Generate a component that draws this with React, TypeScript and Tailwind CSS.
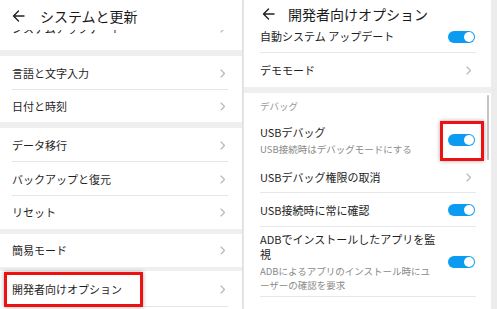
import React from "react";

const font = { fontFamily: '"Noto Sans CJK JP", "Noto Sans", sans-serif' };

function BackArrow() {
  return (
    <svg width="13" height="12" viewBox="0 0 13 12" className="shrink-0">
      <path d="M12 6H1.5M6.5 1L1.5 6L6.5 11" fill="none" stroke="#222" strokeWidth="1.4" strokeLinecap="round" strokeLinejoin="round" />
    </svg>
  );
}

function Chevron() {
  return (
    <svg width="6" height="9" viewBox="0 0 6 9" className="shrink-0">
      <path d="M1 1l3.5 3.5L1 8" fill="none" stroke="#b5b5b5" strokeWidth="1.1" strokeLinecap="round" strokeLinejoin="round" />
    </svg>
  );
}

function Toggle() {
  return (
    <div className="w-[27px] h-[12px] rounded-full bg-[#0b9cf2] flex items-center justify-end pr-[1px] shrink-0">
      <div className="w-[10px] h-[10px] rounded-full bg-white" />
    </div>
  );
}

function LeftRow({ label, h, divider = false }: { label: string; h: string; divider?: boolean }) {
  return (
    <div className={`relative flex items-center justify-between pl-[12px] pr-[16px] ${h}`}>
      <span className="text-[11px] text-[#1e1e1e] leading-none whitespace-nowrap">{label}</span>
      <Chevron />
      {divider && <div className="absolute left-[12px] right-[14px] bottom-0 h-px bg-[#e6e6e6]" />}
    </div>
  );
}

function Band({ h }: { h: string }) {
  return <div className={`${h} bg-[#efefef] w-full`} />;
}

export default function App() {
  return (
    <div className="w-[497px] h-[309px] overflow-hidden bg-[#ececec] flex" style={font}>
      {/* Left panel */}
      <div className="w-[242px] h-full bg-white flex flex-col shadow-[1px_0_2px_rgba(0,0,0,0.08)] z-10">
        <div className="h-[30px] flex items-center pl-[12px] pt-[2px] shrink-0 relative z-10 bg-white">
          <BackArrow />
          <span className="ml-[15px] text-[14px] text-[#1a1a1a] leading-none">システムと更新</span>
        </div>
        <div className="h-[20px] overflow-hidden shrink-0">
          <div className="mt-[-19px]">
            <LeftRow label="システムアップデート" h="h-[34px]" />
          </div>
        </div>
        <Band h="h-[6px]" />
        <LeftRow label="言語と文字入力" h="h-[34px]" divider />
        <LeftRow label="日付と時刻" h="h-[32px]" />
        <Band h="h-[6px]" />
        <LeftRow label="データ移行" h="h-[34px]" divider />
        <LeftRow label="バックアップと復元" h="h-[34px]" divider />
        <LeftRow label="リセット" h="h-[33px]" />
        <Band h="h-[5px]" />
        <LeftRow label="簡易モード" h="h-[33px]" />
        <Band h="h-[4px]" />
        <div className="relative">
          <LeftRow label="開発者向けオプション" h="h-[36px]" divider />
          <div className="absolute left-[4px] top-[1px] w-[139px] h-[35px] border-[3px] border-[#ee1111] shadow-[0_0_4px_rgba(0,0,0,0.35)]" />
        </div>
      </div>

      {/* Right panel */}
      <div className="relative ml-[2px] w-[247px] h-full bg-white flex flex-col">
        <div className="h-[24px] flex items-center pl-[18px] pt-[3px] shrink-0">
          <BackArrow />
          <span className="ml-[13px] text-[14px] text-[#1a1a1a] leading-none">開発者向けオプション</span>
        </div>
        <div className="relative h-[30px] flex items-center justify-between pl-[16px] pr-[16px] pb-[4px]">
          <span className="text-[11px] text-[#1e1e1e] leading-none">自動システム アップデート</span>
          <Toggle />
          <div className="absolute left-[16px] right-[15px] bottom-[1px] h-px bg-[#e8e8e8]" />
        </div>
        <div className="h-[34px] flex items-center justify-between pl-[16px] pr-[19px]">
          <span className="text-[11px] text-[#1e1e1e] leading-none">デモモード</span>
          <Chevron />
        </div>
        <Band h="h-[6px]" />
        <div className="h-[26px] flex items-center pl-[16px] pt-[2px]">
          <span className="text-[9.5px] text-[#9a9a9a] leading-none">デバッグ</span>
        </div>
        <div className="relative h-[43px] flex items-center justify-between pl-[16px] pr-[16px]">
          <div className="flex flex-col">
            <span className="text-[11px] text-[#1e1e1e] leading-[15px]">USBデバッグ</span>
            <span className="mt-[2px] text-[9.5px] text-[#8a8a8a] leading-[14px]">USB接続時はデバッグモードにする</span>
          </div>
          <Toggle />
          <div className="absolute left-[196px] top-[2px] w-[44px] h-[40px] border-[3px] border-[#ee1111] shadow-[0_0_4px_rgba(0,0,0,0.35)]" />
        </div>
        <div className="relative h-[32px] flex items-center justify-between pl-[16px] pr-[19px]">
          <span className="text-[11px] text-[#1e1e1e] leading-none">USBデバッグ権限の取消</span>
          <Chevron />
          <div className="absolute left-[16px] right-[15px] bottom-0 h-px bg-[#e8e8e8]" />
        </div>
        <div className="relative h-[34px] flex items-center justify-between pl-[16px] pr-[16px]">
          <span className="text-[11px] text-[#1e1e1e] leading-none">USB接続時に常に確認</span>
          <Toggle />
          <div className="absolute left-[16px] right-[15px] bottom-0 h-px bg-[#e8e8e8]" />
        </div>
        <div className="relative h-[71px] flex items-center justify-between pl-[16px] pr-[16px]">
          <div className="flex flex-col whitespace-nowrap">
            <span className="text-[11px] text-[#1e1e1e] leading-[15px]">
              ADBでインストールしたアプリを監
              <br />視
            </span>
            <span className="mt-[2px] text-[9.5px] text-[#8a8a8a] leading-[14px]">
              ADBによるアプリのインストール時にユ
              <br />ーザーの確認を要求
            </span>
          </div>
          <Toggle />
          <div className="absolute left-[16px] right-[15px] bottom-0 h-px bg-[#e8e8e8]" />
        </div>
        <div className="h-[12px] overflow-hidden pl-[16px] pt-[4px]">
          <span className="text-[11px] text-[#1e1e1e] leading-none whitespace-nowrap">表示専用モードでUSBデバッグを許</span>
        </div>
        <div className="absolute left-[243px] top-[95px] w-[2px] h-[65px] rounded-full bg-[#c4c4c4]" />
      </div>
    </div>
  );
}
